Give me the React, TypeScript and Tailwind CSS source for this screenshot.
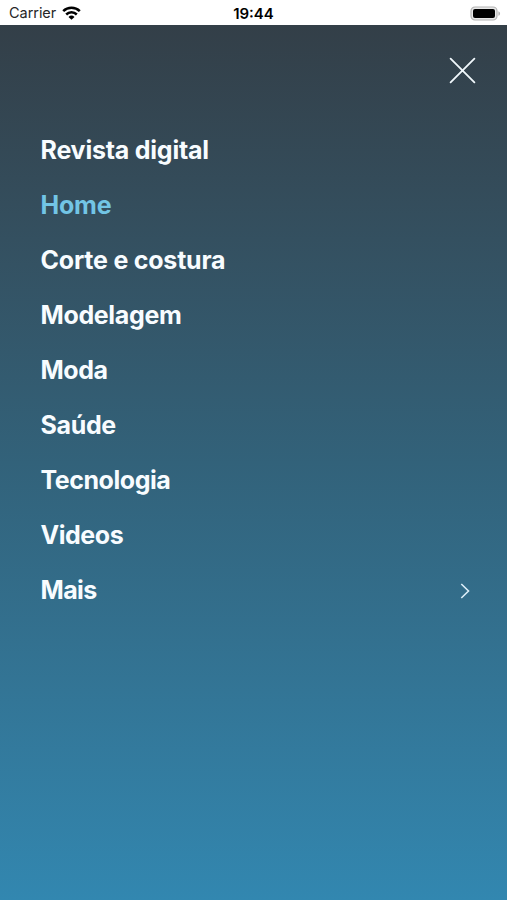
const menu = [
  { label: "Revista digital", tracking: "tracking-[-0.22px]" },
  { label: "Home", tracking: "tracking-[-0.2px]", active: true },
  { label: "Corte e costura", tracking: "tracking-[-0.22px]" },
  { label: "Modelagem", tracking: "tracking-[-0.35px]" },
  { label: "Moda", tracking: "tracking-[-0.45px]" },
  { label: "Saúde", tracking: "tracking-[-0.35px]" },
  { label: "Tecnologia", tracking: "tracking-[-0.45px]" },
  { label: "Videos", tracking: "tracking-[-0.45px]" },
  { label: "Mais", tracking: "tracking-[-0.6px]", more: true },
];

function WifiIcon() {
  return (
    <svg className="h-[14px] w-[19px]" viewBox="0 0 19 14" fill="none" stroke="#000" strokeWidth="2.5">
      <path d="M1.2 5.1a11.8 11.8 0 0 1 16.6 0" />
      <path d="M4.2 8.5a7.5 7.5 0 0 1 10.6 0" />
      <path d="M9.5 13.8 6.5 10.9a4.3 4.3 0 0 1 6 0Z" fill="#000" stroke="none" />
    </svg>
  );
}

function BatteryIcon() {
  return (
    <svg className="h-[15px] w-[31px]" viewBox="0 0 31 15">
      <rect x="1" y="1" width="26" height="13" rx="4" fill="#e8e8e8" stroke="#b3b3b3" strokeWidth="1.2" />
      <rect x="3" y="3" width="22" height="9" rx="2" fill="#000" />
      <path d="M28.4 5.2c2.2.8 2.2 3.8 0 4.6Z" fill="#b3b3b3" />
    </svg>
  );
}

function StatusBar() {
  return (
    <header className="grid h-[25px] grid-cols-3 items-center bg-white pt-[2px] pr-[6px] pl-[9px] text-[14.5px] text-[#262626]">
      <div className="-mt-px flex items-center gap-[6px]">
        <span className="tracking-[-0.05px]">Carrier</span>
        <WifiIcon />
      </div>
      <span className="-ml-[3px] pt-px text-center text-[15px] font-semibold text-black">19:44</span>
      <div className="-mt-px flex justify-end">
        <BatteryIcon />
      </div>
    </header>
  );
}

export default function App() {
  return (
    <div className="flex h-[900px] w-[507px] flex-col overflow-hidden font-['Inter',sans-serif]">
      <StatusBar />
      <main className="flex-1 bg-linear-to-b from-[#333f48] via-[#32627a] to-[#3287b0]">
        <div className="flex justify-end pt-[32px] pr-[31px]">
          <button aria-label="Fechar">
            <svg className="size-[27px]" viewBox="0 0 27 27" stroke="#f1f8fc" strokeWidth="1.8" strokeLinecap="round">
              <path d="M1.6 1.6 25.4 25.4M25.4 1.6 1.6 25.4" />
            </svg>
          </button>
        </div>
        <nav className="mt-[39px] pr-[37px] pl-[40.5px]">
          {menu.map((item) => (
            <a
              key={item.label}
              className={`flex h-[55px] items-center justify-between text-[25px] font-bold ${item.tracking} ${item.active ? "text-[#72c5e5]" : "text-[#f8fcff]"}`}
            >
              <span>{item.label}</span>
              {item.more && (
                <svg className="h-[16px] w-[10px]" viewBox="0 0 10 16" fill="none" stroke="#dceef8" strokeWidth="1.6">
                  <path d="m1.3 1 7.2 7-7.2 7" />
                </svg>
              )}
            </a>
          ))}
        </nav>
      </main>
    </div>
  );
}
